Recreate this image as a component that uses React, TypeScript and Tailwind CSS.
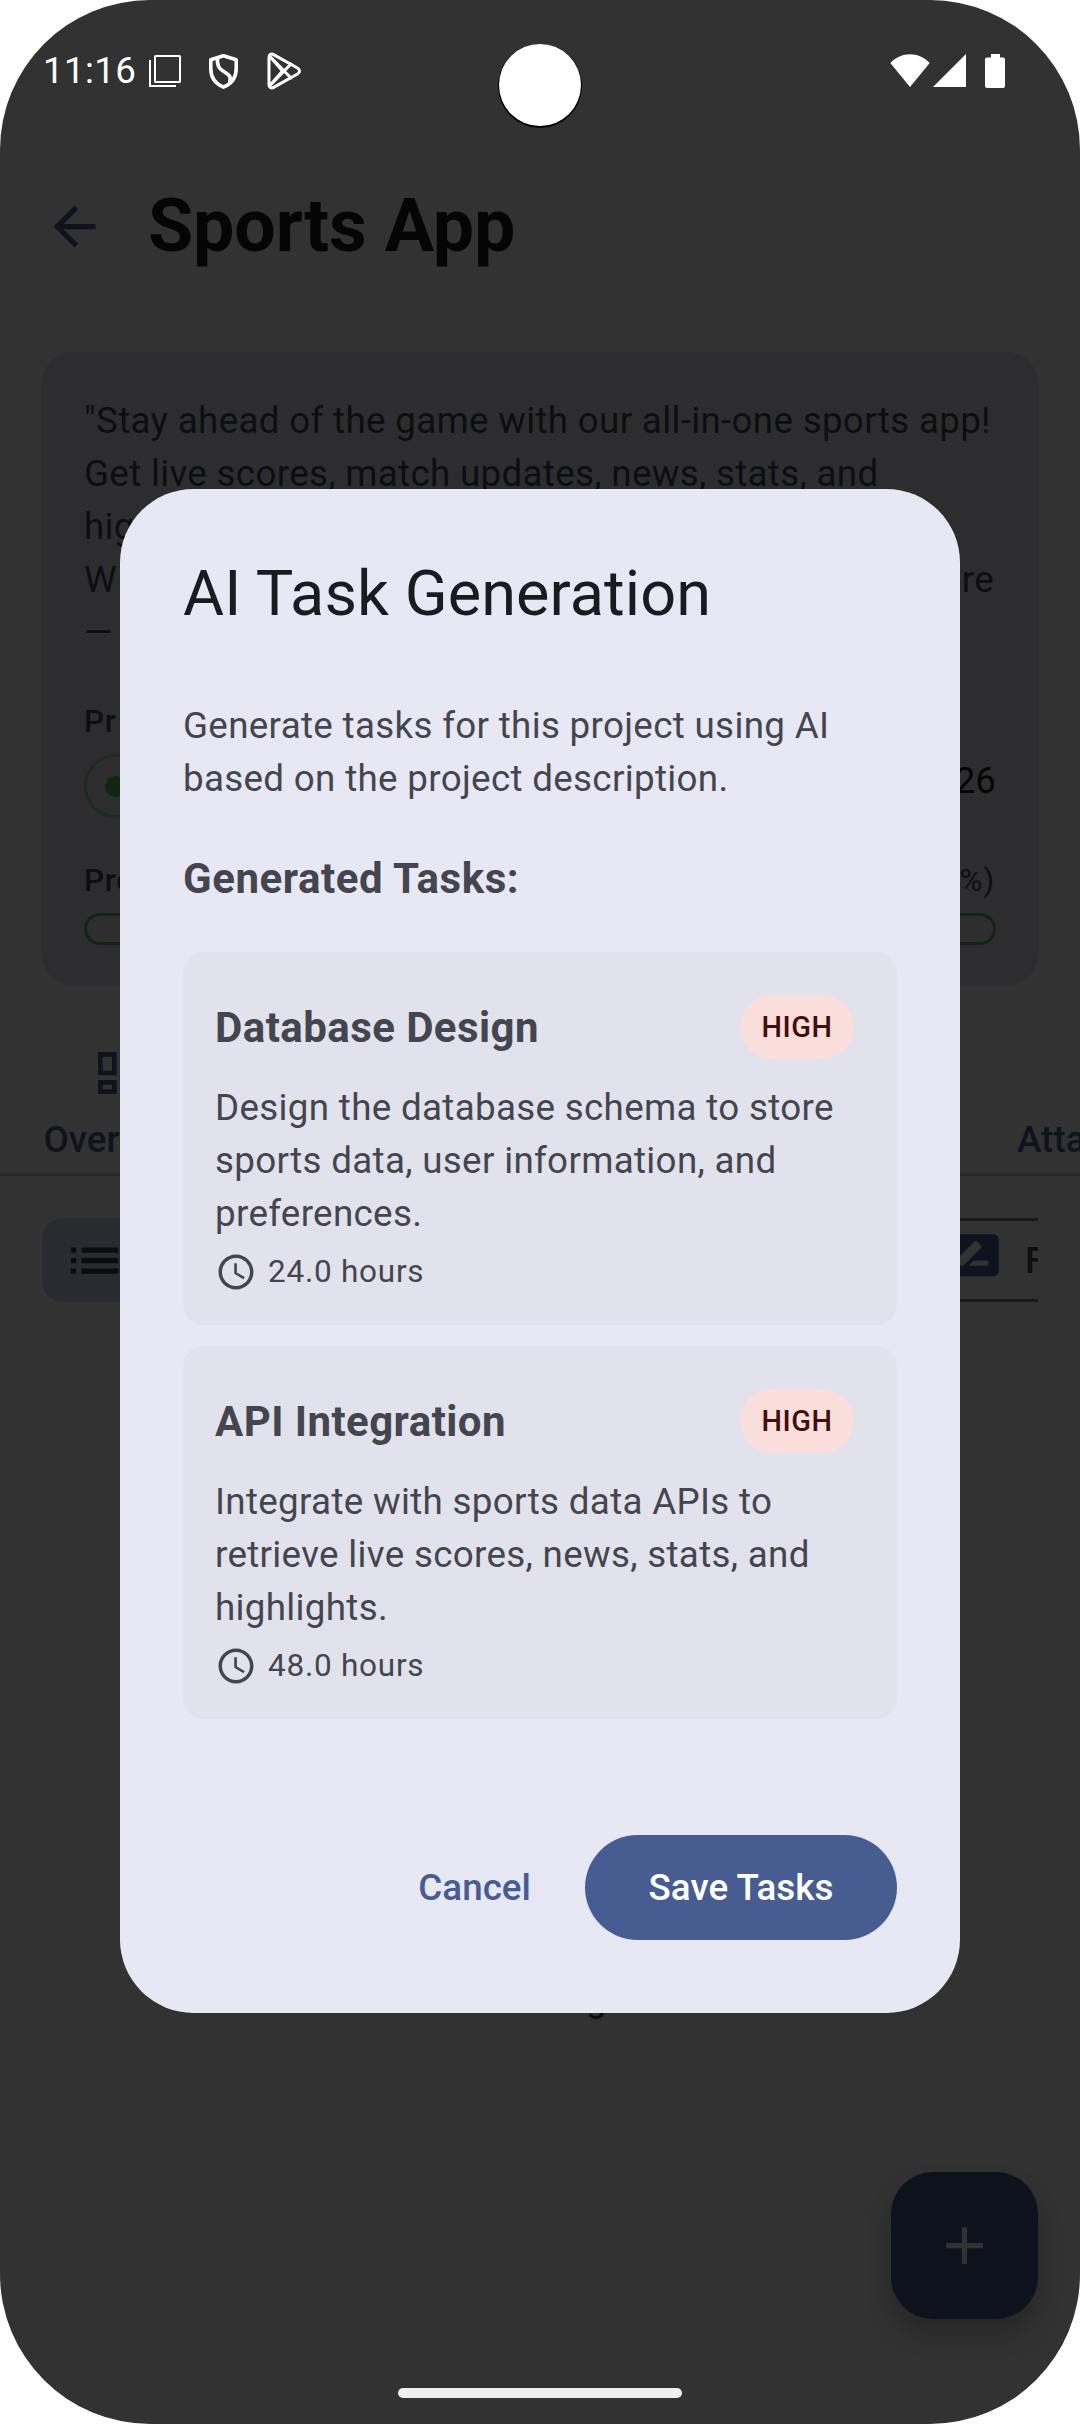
import React from "react";
import { MdArrowBack, MdAdd, MdList, MdOutlineDashboard, MdRateReview, MdOutlineAccessTime } from "react-icons/md";

const tasks = [
  {
    title: "Database Design",
    priority: "HIGH",
    lines: ["Design the database schema to store", "sports data, user information, and", "preferences."],
    hours: "24.0 hours",
  },
  {
    title: "API Integration",
    priority: "HIGH",
    lines: ["Integrate with sports data APIs to", "retrieve live scores, news, stats, and", "highlights."],
    hours: "48.0 hours",
  },
];

function StatusBar() {
  return (
    <div className="absolute inset-x-0 top-0 flex h-[142px] items-start justify-between pr-[75px] pl-[43px] text-white">
      <div className="flex items-start">
        <span className="mt-[44px] w-[106px] text-[36.75px] leading-[53px] tracking-[0.35px]">11:16</span>
        <svg className="mt-[55px] h-[32px] w-[32px]" viewBox="0 0 32 32" fill="none" stroke="currentColor" strokeWidth="2">
          <rect x="6" y="1" width="25" height="26" rx="0.5" />
          <path d="M1 5V31H27" />
        </svg>
        <svg className="mt-[53px] ml-[27px] h-[37px] w-[31px]" viewBox="0 0 31 37" fill="none" stroke="currentColor" strokeWidth="3.6" strokeLinejoin="round">
          <path d="M15.5 2.8L2.800 6.800V16C2.800 25 8 31 15.500 34.200C23 31 28.200 25 28.200 16V6.800Z" />
          <path d="M9.500 4.500C9 13 11 15.500 15 18C20.500 21.500 24 23 21.500 30" />
        </svg>
        <svg className="mt-[52px] ml-[27px] h-[38px] w-[36px]" viewBox="0 0 36 38" fill="none" stroke="currentColor" strokeWidth="3" strokeLinejoin="round" strokeLinecap="round">
          <path d="M3 5C3 2.500 5.500 1.400 7.600 2.600L31.500 16C34.200 17.600 34.200 20.400 31.500 22L7.600 35.400C5.500 36.600 3 35.500 3 33Z" />
          <path d="M3.500 4L25 26M3.500 34L25 12M3.500 4L16.500 19L3.500 34" />
        </svg>
      </div>
      <div className="mt-[54px] flex items-start">
        <svg className="h-[33px] w-[40px]" viewBox="0 0 40 33" fill="currentColor">
          <path d="M0.300 9C11 -2.800 29 -2.800 39.700 9L20 33Z" />
        </svg>
        <svg className="ml-[3px] h-[33px] w-[33px]" viewBox="0 0 33 33" fill="currentColor">
          <path d="M0 33L33 0V33Z" />
        </svg>
        <svg className="ml-[19px] h-[34px] w-[20px]" viewBox="0 0 20 34" fill="currentColor">
          <path d="M6 0H15V3.500H18Q20 3.500 20 5.500V32Q20 34 18 34H2Q0 34 0 32V5.500Q0 3.500 2 3.500H6Z" />
        </svg>
      </div>
      <div className="absolute top-[44px] left-[498px] size-[84px] rounded-full bg-black" />
      <div className="absolute top-[44px] left-[499px] size-[82px] rounded-full bg-white" />
    </div>
  );
}

function ProjectScreen() {
  return (
    <div className="flex h-full flex-col">
      <header className="mt-[195px] flex h-[63px] items-center pl-[43px]">
        <MdArrowBack className="size-[63px] text-[#0e131f]" />
        <h1 className="mb-[2px] ml-[42px] text-[73.5px] leading-[84px] font-bold tracking-[-0.15px] text-[#050505]">Sports App</h1>
      </header>

      <section className="mx-[42px] mt-[94px] h-[634px] rounded-[31.5px] bg-[#2d2d2f] p-[42px] text-[#0d0e10]">
        <div className="text-[36.75px] leading-[53px] tracking-[0.32px] whitespace-nowrap">
          <p>"Stay ahead of the game with our all-in-one sports app!</p>
          <p>Get live scores, match updates, news, stats, and</p>
          <p>hig</p>
          <p className="flex justify-between pr-[2px]"><span>W</span><span>re</span></p>
          <p>—</p>
        </div>
        <div className="mt-[42px] text-[31.5px] leading-[42px] font-medium tracking-[0.6px]">Pr</div>
        <div className="mt-[11px] flex items-start justify-between">
          <div className="flex h-[64px] w-[180px] items-center rounded-full border-[3px] border-[#1d2c20] pl-[18px]">
            <div className="size-[21px] rounded-full bg-[#0f2612]" />
          </div>
          <span className="text-[36.75px] leading-[53px] text-[#050505]">26</span>
        </div>
        <div className="mt-[42px] flex justify-between text-[31.5px] leading-[42px] tracking-[0.75px]">
          <span className="font-medium">Pro</span>
          <span className="mr-[1px]">%)</span>
        </div>
        <div className="mt-[11px] h-[32px] rounded-full border-[3px] border-[#0f2612] bg-[#2e2e2f]" />
      </section>

      <nav className="flex h-[190px] items-start justify-between overflow-hidden border-b-[3px] border-[#272728] pt-[59px] pl-[44px] text-[36.75px] leading-[53px] font-medium tracking-[0.04px] text-[#0e131f]">
        <div className="flex w-[150px] flex-col items-center">
          <MdOutlineDashboard className="size-[56px]" />
          <span className="mt-[12px]">Overview</span>
        </div>
        <span className="mt-[68px] w-[63px] whitespace-nowrap">Attachments</span>
      </nav>

      <div className="mx-[42px] mt-[42px] flex h-[84px] justify-between overflow-hidden">
        <div className="flex w-[240px] items-center rounded-l-[21px] bg-[#2a2b31] pl-[21px]">
          <MdList className="size-[63px] text-[#0b0c0f]" />
        </div>
        <div className="flex w-[240px] items-center overflow-hidden border-y-[3px] border-[#19191a] pl-[143px]">
          <MdRateReview className="size-[63px] shrink-0 text-[#0e131f]" />
          <span className="ml-[21px] text-[36.75px] leading-[53px] font-medium text-[#0f0f10]">F</span>
        </div>
      </div>

      <p className="mt-[670px] ml-[586px] text-[36.75px] leading-[53px] text-[#0b0b0c]">g</p>

      <div className="mt-[147px] mr-[42px] flex size-[147px] items-center justify-center self-end rounded-[42px] bg-[#0e121c] shadow-[0_16px_24px_0px_rgba(0,0,0,0.24)]">
        <MdAdd className="size-[63px] text-[#323232]" />
      </div>
    </div>
  );
}

function TaskCard({ task }: { task: (typeof tasks)[number] }) {
  return (
    <article className="h-[373px] rounded-[21px] bg-[#e2e2ec] pt-[43px] pl-[32px]">
      <div className="flex h-[64px] items-center justify-between pr-[43px]">
        <h3 className="text-[42px] leading-[63px] font-bold tracking-[0.43px]">{task.title}</h3>
        <span className="flex h-[64px] w-[114px] items-center justify-center rounded-[31.5px] bg-[#f9dedc] text-[28.875px] leading-[42px] font-medium tracking-[0.5px] text-[#410e0b]">
          {task.priority}
        </span>
      </div>
      <div className="mt-[22px] text-[36.75px] leading-[53px] tracking-[0.32px] whitespace-nowrap">
        {task.lines.map((line) => (
          <p key={line}>{line}</p>
        ))}
      </div>
      <div className="mt-[11px] flex items-center gap-[11px] text-[31.5px] leading-[42px] tracking-[0.75px]">
        <MdOutlineAccessTime className="size-[42px]" />
        <span>{task.hours}</span>
      </div>
    </article>
  );
}

function TaskDialog() {
  return (
    <div className="absolute inset-0 flex items-start justify-center pt-[489px]">
      <div role="dialog" className="h-[1524px] w-[840px] rounded-[73.5px] bg-[#e8e8f4] p-[63px] text-[#44464f]">
        <h2 className="text-[63px] leading-[84px] tracking-[0.08px] text-[#1a1b20]">AI Task Generation</h2>
        <div className="mt-[63px] text-[36.75px] leading-[53px] tracking-[0.32px]">
          <p>Generate tasks for this project using AI</p>
          <p>based on the project description.</p>
        </div>
        <h3 className="mt-[42px] text-[42px] leading-[63px] font-bold tracking-[0.55px]">Generated Tasks:</h3>
        <div className="mt-[42px] flex flex-col gap-[21px]">
          {tasks.map((task) => (
            <TaskCard key={task.title} task={task} />
          ))}
        </div>
        <div className="mt-[116px] flex h-[105px] items-center justify-end text-[36.75px] leading-[53px] font-medium tracking-[0.04px]">
          <button className="mr-[54px] text-[#475d92]">Cancel</button>
          <button className="h-[105px] w-[312px] rounded-full bg-[#475d92] text-white">Save Tasks</button>
        </div>
      </div>
    </div>
  );
}

export default function App() {
  return (
    <div className="h-[2424px] w-[1080px] overflow-hidden bg-white font-[Roboto,sans-serif]">
      <div className="relative h-full w-full overflow-hidden rounded-[150px] bg-[#323232]">
        <ProjectScreen />
        <TaskDialog />
        <StatusBar />
        <div className="absolute bottom-[26px] left-[398px] h-[10px] w-[284px] rounded-full bg-[#eeeeee]" />
      </div>
    </div>
  );
}
